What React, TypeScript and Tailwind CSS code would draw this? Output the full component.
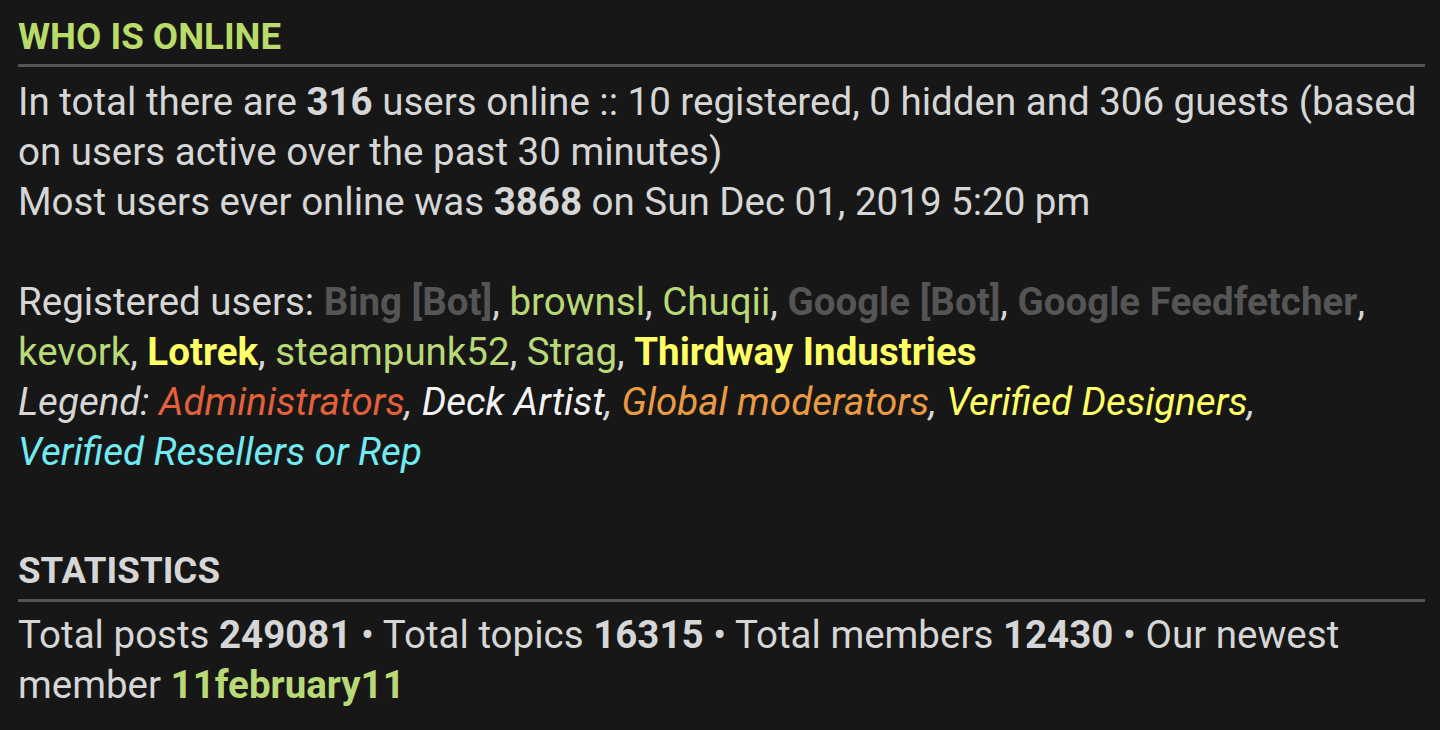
const bot = 'font-bold text-[#555555]'
const reg = 'text-[#b9d977]'
const ver = 'font-bold text-[#ffff66]'

export default function App() {
  return (
    <div
      className="min-h-screen w-full bg-[#171717] pl-[18px] pr-[15px] text-[38.5px] leading-[50px] text-[#d6d6d6]"
      style={{ fontFamily: 'Roboto, "Noto Sans", sans-serif' }}
    >
      <h3 className="border-b-[3px] border-[#555555] pt-[17px] pb-[7px] text-[36.7px] leading-[40px] font-bold text-[#b9db6a]">
        WHO IS ONLINE
      </h3>
      <p className="mt-[10px]">
        In total there are <strong>316</strong> users online :: 10 registered, 0 hidden and 306 guests (based on
        users active over the past 30 minutes)
        <br />
        Most users ever online was <strong>3868</strong> on Sun Dec 01, 2019 5:20 pm
        <br />
        <br />
        Registered users: <span className={bot}>Bing [Bot]</span>, <span className={reg}>brownsl</span>,{' '}
        <span className={reg}>Chuqii</span>, <span className={bot}>Google [Bot]</span>,{' '}
        <span className={bot}>Google Feedfetcher</span>, <span className={reg}>kevork</span>,{' '}
        <span className={ver}>Lotrek</span>, <span className={reg}>steampunk52</span>,{' '}
        <span className={reg}>Strag</span>, <span className={ver}>Thirdway Industries</span>
        <br />
        <em>
          Legend: <span className="whitespace-nowrap text-[#e2613a]">Administrators</span>,{' '}
          <span className="whitespace-nowrap text-[#f2f2f2]">Deck Artist</span>,{' '}
          <span className="whitespace-nowrap text-[#ea9a42]">Global moderators</span>,{' '}
          <span className="whitespace-nowrap text-[#ffff66]">Verified Designers</span>,{' '}
          <span className="whitespace-nowrap text-[#72eaf2]">Verified Resellers or Rep</span>
        </em>
      </p>

      <h3 className="mt-[74px] border-b-[3px] border-[#555555] pb-[8px] text-[36.7px] leading-[40px] font-bold text-[#d6d6d6]">
        STATISTICS
      </h3>
      <p className="mt-[8px]">
        Total posts <strong>249081</strong> • Total topics <strong>16315</strong> • Total members{' '}
        <strong>12430</strong> • Our newest member <strong className="text-[#b9d977]">11february11</strong>
      </p>
    </div>
  )
}
